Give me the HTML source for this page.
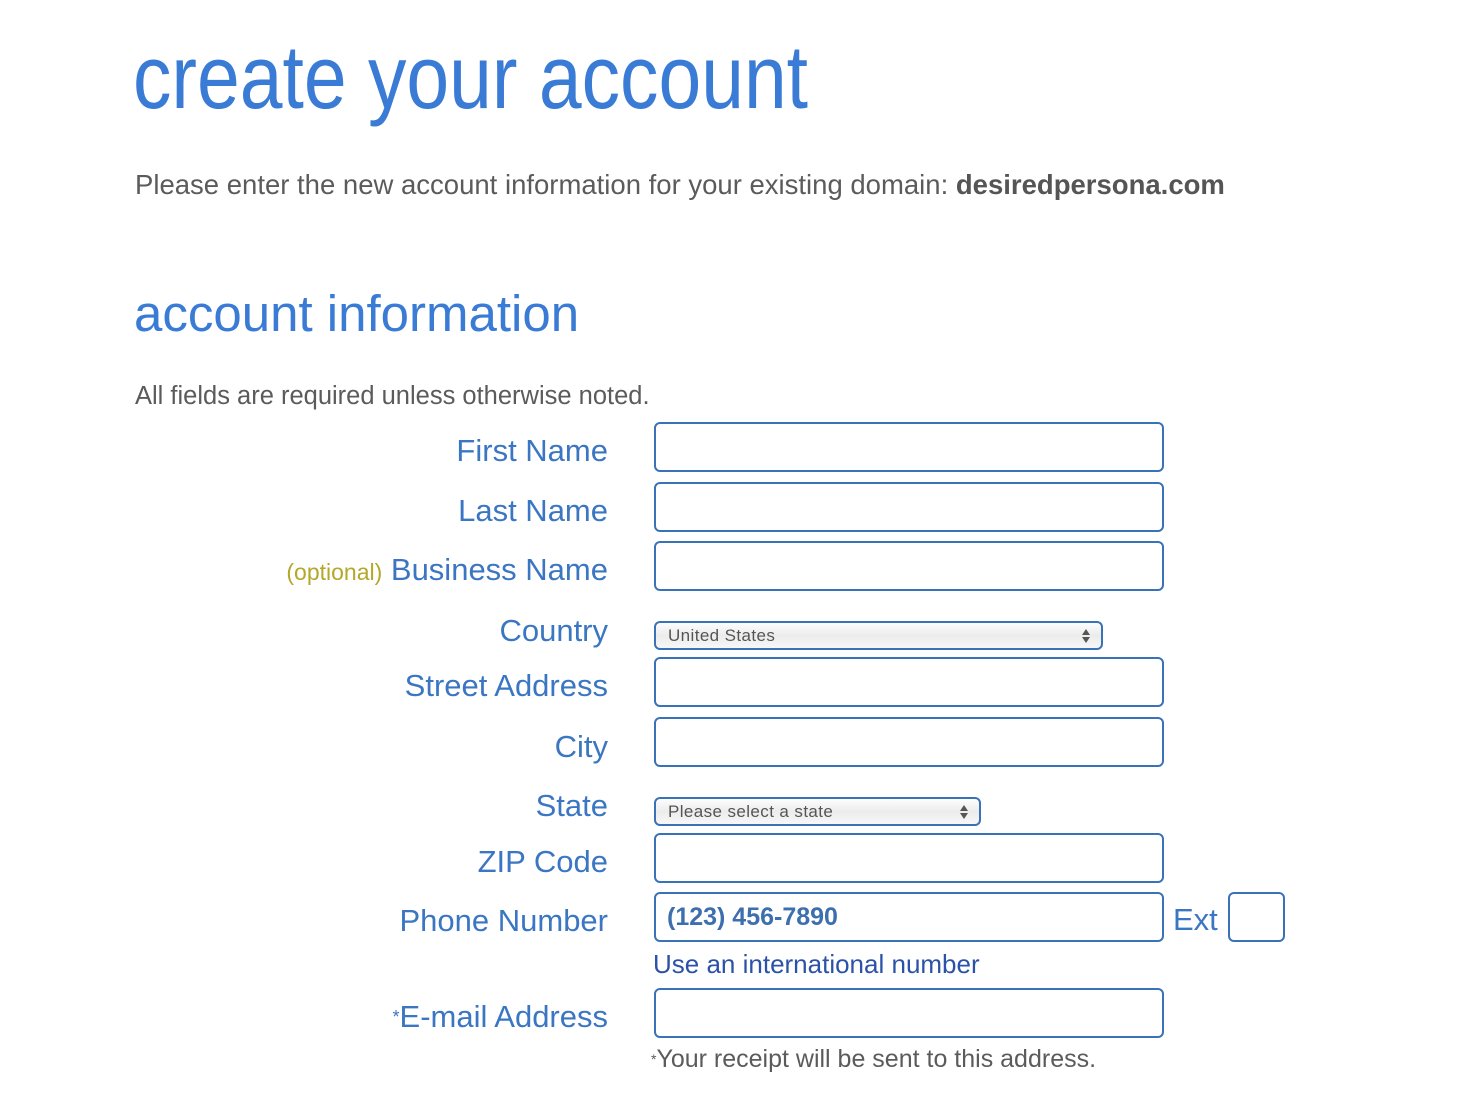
<!DOCTYPE html>
<html><head><meta charset="utf-8"><style>
*{margin:0;padding:0;box-sizing:border-box}
body{width:1480px;height:1114px;background:#fff;position:relative;overflow:hidden;font-family:"Liberation Sans",sans-serif}
.a{position:absolute;white-space:nowrap}
.t{color:#3a7bd5}
.g{color:#5b5b5b}
.lab{position:absolute;right:872px;color:#3b76c3;font-size:31px;line-height:40px;white-space:nowrap}
.in{position:absolute;left:654px;width:510px;height:50px;border:2px solid #3a72b8;border-radius:6px;background:#fff}
.sel{position:absolute;left:654px;height:29px;border:2px solid #3a72b8;border-radius:6px;background:linear-gradient(#fdfdfd,#ececec 50%,#f7f7f7);color:#555;font-size:17px;line-height:25px;padding-left:12px;letter-spacing:0.4px}
.sel svg{position:absolute;right:10px;top:5px}
</style></head><body>
<div class="a t" style="left:133px;top:28px;font-size:90px;line-height:100px;transform:scaleX(0.854);transform-origin:left top">create your account</div>
<div class="a g" style="left:135px;top:168px;font-size:27.5px;line-height:34px">Please enter the new account information for your existing domain: <span style="font-weight:bold;color:#555">desiredpersona.com</span></div>
<div class="a t" style="left:134px;top:284px;font-size:51px;line-height:60px">account information</div>
<div class="a g" style="left:135px;top:381px;font-size:25.5px;line-height:30px">All fields are required unless otherwise noted.</div>

<div class="lab" style="top:431px">First Name</div>
<div class="in" style="top:422px"></div>
<div class="lab" style="top:491px">Last Name</div>
<div class="in" style="top:482px"></div>
<div class="lab" style="top:550px"><span style="color:#b3a82a;font-size:23px">(optional)</span> Business Name</div>
<div class="in" style="top:541px"></div>
<div class="lab" style="top:611px">Country</div>
<div class="sel" style="top:621px;width:449px">United States<svg width="10" height="16" viewBox="0 0 10 16"><path d="M5 1L9 7H1z M5 15L1 9H9z" fill="#555"/></svg></div>
<div class="lab" style="top:666px">Street Address</div>
<div class="in" style="top:657px"></div>
<div class="lab" style="top:727px">City</div>
<div class="in" style="top:717px"></div>
<div class="lab" style="top:786px">State</div>
<div class="sel" style="top:797px;width:327px">Please select a state<svg width="10" height="16" viewBox="0 0 10 16"><path d="M5 1L9 7H1z M5 15L1 9H9z" fill="#555"/></svg></div>
<div class="lab" style="top:842px">ZIP Code</div>
<div class="in" style="top:833px"></div>
<div class="lab" style="top:901px">Phone Number</div>
<div class="in" style="top:892px;padding-left:11px;font-size:25px;line-height:46px;color:#3d6fae;font-weight:bold">(123) 456-7890</div>
<div class="a" style="left:1173px;top:900px;font-size:31px;line-height:40px;color:#3b76c3">Ext</div>
<div class="in" style="top:892px;left:1228px;width:57px"></div>
<div class="a" style="left:653px;top:948px;font-size:26px;line-height:32px;color:#2c52a8">Use an international number</div>
<div class="lab" style="top:997px"><span style="font-size:18px;vertical-align:top">*</span>E-mail Address</div>
<div class="in" style="top:988px"></div>
<div class="a g" style="left:651px;top:1044px;font-size:25px;line-height:30px"><span style="font-size:14px;vertical-align:top">*</span>Your receipt will be sent to this address.</div>
</body></html>
